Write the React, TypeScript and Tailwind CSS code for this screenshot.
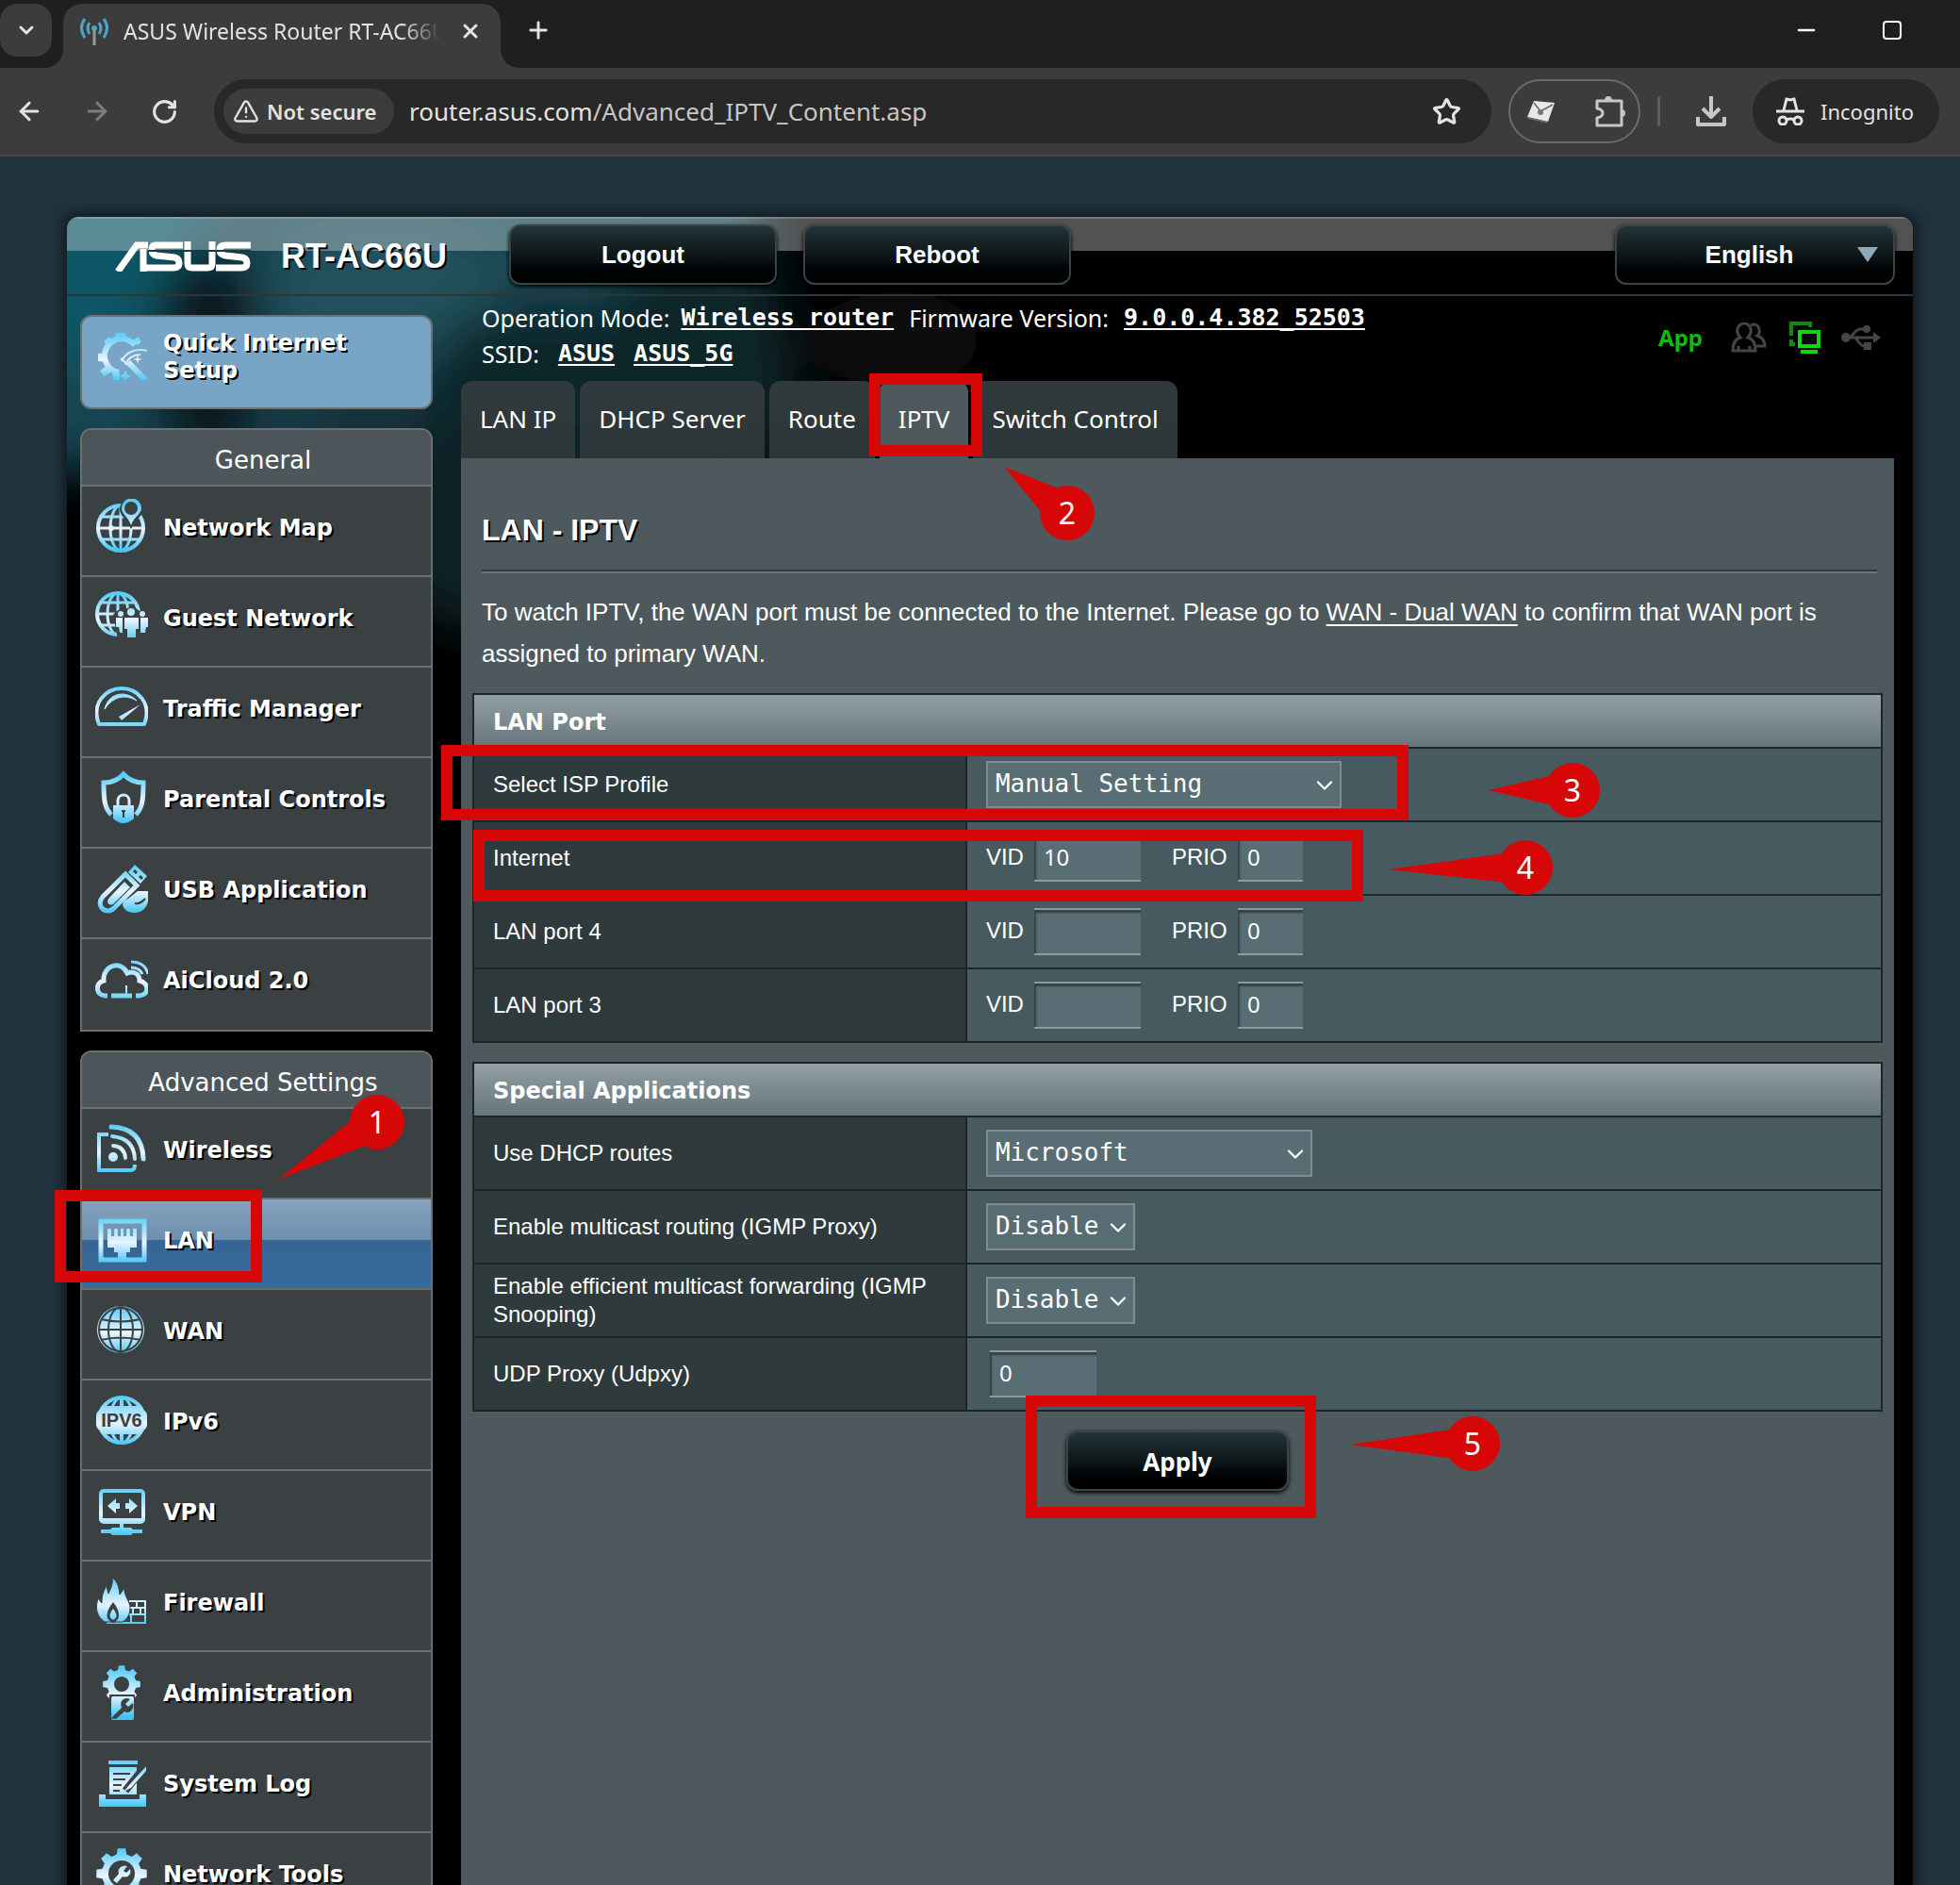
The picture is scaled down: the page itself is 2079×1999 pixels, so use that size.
import { ReactNode } from 'react';
import { ArrowLeft, ArrowRight, ChevronDown, Minus, Plus, RotateCw, Star, TriangleAlert, X } from 'lucide-react';

const CYAN = 'url(#cyan)';
const DARK = '#3b4042';

// Closed outline of a gear with flat teeth
const gearPath = (cx: number, cy: number, r: number, teeth = 8) => {
  const inner = r * 0.78;
  const step = (Math.PI * 2) / teeth;
  const points: string[] = [];
  for (let i = 0; i < teeth; i++) {
    const a = i * step - Math.PI / 2;
    [
      [inner, -0.32],
      [r, -0.2],
      [r, 0.2],
      [inner, 0.32],
    ].forEach(([radius, t]) => {
      points.push(`${(cx + radius * Math.cos(a + t * step)).toFixed(1)} ${(cy + radius * Math.sin(a + t * step)).toFixed(1)}`);
    });
  }
  return `M${points.join('L')}Z`;
};

const MenuIcon = ({ children }: { children: ReactNode }) => (
  <svg className="w-14 h-[60px] shrink-0" viewBox="0 0 56 60" fill="none" aria-hidden="true">
    {children}
  </svg>
);

const icons: Record<string, ReactNode> = {
  setup: (
    <MenuIcon>
      <path d="M40 12l5-4 4 5-4 4zM22 4h10l2 8H20zM9 13l6-5 6 6-7 6zM3 26l8-1v10l-8-1zM9 50l-4-6 7-5 6 6zM18 45l8 1v8h-7z" fill={CYAN} />
      <path d="M42 17a18 18 0 1 0-17 29" stroke={CYAN} strokeWidth="6" />
      <path d="M35 35l18 19" stroke={CYAN} strokeWidth="6" />
      <path d="M28 34c4-9 14-14 27-11M32 38c2-7 9-11 16-11M27 31l10 9" stroke={CYAN} strokeWidth="2" />
      <path d="M32 44l2 4 4 2-4 2-2 4-2-4-4-2 4-2zM45 27l1 4 4 1-4 1-1 4-1-4-4-1 4-1z" fill={CYAN} />
    </MenuIcon>
  ),
  map: (
    <MenuIcon>
      <circle cx="27" cy="31" r="24" stroke={CYAN} strokeWidth="4" />
      <ellipse cx="27" cy="31" rx="11" ry="24" stroke={CYAN} strokeWidth="3" />
      <path d="M27 7v48M3 31h48M7 19h40M7 43h40" stroke={CYAN} strokeWidth="3" />
      <circle cx="17" cy="31" r="3" fill={CYAN} />
      <path d="M38 32C33 22 26 17 26 11a12 12 0 0 1 25 0c0 6-8 11-13 21z" fill={DARK} />
      <path d="M38 28C35 19 28 16 28 10a10 10 0 0 1 21 0c0 6-8 9-11 18z" fill={CYAN} />
      <circle cx="38" cy="10" r="7" fill={DARK} />
    </MenuIcon>
  ),
  guest: (
    <MenuIcon>
      <circle cx="24" cy="26" r="22" stroke={CYAN} strokeWidth="4" />
      <ellipse cx="24" cy="26" rx="11" ry="22" stroke={CYAN} strokeWidth="3" />
      <path d="M24 4v44M2 26h44M6 14h36M6 38h36" stroke={CYAN} strokeWidth="3" />
      <path d="M19 27q6-8 12-5 8-7 16 1 8 0 10 8v22H24z" fill={DARK} />
      <circle cx="38" cy="24" r="4" fill={CYAN} />
      <circle cx="27" cy="26" r="3" fill={CYAN} />
      <circle cx="50" cy="26" r="3" fill={CYAN} />
      <path d="M31 30h15v12h-3v9h-9v-9h-3zM22 30h7v16h-3l-1-6h-3zM48 30h8v10h-2l-1 6h-5z" fill={CYAN} />
    </MenuIcon>
  ),
  traffic: (
    <MenuIcon>
      <path d="M4 47C-5 24 12 9 28 9s33 15 24 38z" stroke={CYAN} strokeWidth="4" strokeLinejoin="round" />
      <path d="M10 31c5-20 25-19 34-9-14-8-26-3-34 9z" fill={CYAN} stroke={CYAN} />
      <path d="M25 39l23-13-20 17z" fill={CYAN} />
    </MenuIcon>
  ),
  parental: (
    <MenuIcon>
      <path d="M17 47C10 40 9 32 9 13q13 0 21-9 8 9 21 9c0 19-1 27-8 34" stroke={CYAN} strokeWidth="5" />
      <path d="M24 37v-5c0-8 12-8 12 0v5" stroke={CYAN} strokeWidth="3" />
      <path d="M19 37h22v14q-11 10-22 0z" fill={CYAN} />
      <path d="M30 42v8M28 43h4" stroke={DARK} strokeWidth="2" />
    </MenuIcon>
  ),
  usb: (
    <MenuIcon>
      <path d="M32 14L44 26 20 50q-7 6-13 0-4-6 1-12z" stroke={CYAN} strokeWidth="5" />
      <path d="M31 22l6 6-18 18q-5 2-6-3 0-2 2-4z" fill={CYAN} />
      <path d="M35 12l7-8 13 12-7 8z" fill={CYAN} />
      <path d="M41 10l3 3M47 16l3 3" stroke={DARK} strokeWidth="3" />
      <path d="M29 47q0-5 6-7l10-8h11v11q-3 12-15 12-10-1-12-8z" fill={CYAN} />
      <path d="M42 45q6 1 11-5" stroke={DARK} strokeWidth="2" />
    </MenuIcon>
  ),
  cloud: (
    <MenuIcon>
      <path d="M13 47H10C0 46 0 33 9 31 8 14 28 9 34 23c7-3 13 1 13 8 11 3 10 15 0 16h-4" stroke={CYAN} strokeWidth="5" />
      <path d="M17 47h22" stroke={CYAN} strokeWidth="5" />
      <path d="M33 36v9" stroke={CYAN} strokeWidth="2" />
      <path d="M38 11q15 0 18 13M38 17q9 0 12 7" stroke={CYAN} strokeWidth="3" />
    </MenuIcon>
  ),
  wireless: (
    <MenuIcon>
      <path d="M14 14H4v38h34q4 0 4-6" stroke={CYAN} strokeWidth="4" />
      <path d="M17 6q33 1 34 34" stroke={CYAN} strokeWidth="5" strokeLinecap="round" />
      <path d="M18 16q23 2 24 24M19 26q12 1 13 13" stroke={CYAN} strokeWidth="4" strokeLinecap="round" />
      <circle cx="19" cy="38" r="5" fill={CYAN} />
    </MenuIcon>
  ),
  lan: (
    <MenuIcon>
      <rect x="6" y="10" width="46" height="41" stroke={CYAN} strokeWidth="5" />
      <path d="M13 18h4v8h3v-8h4v8h3v-8h3v8h3v-8h4v8h3v-8h4v20h-7v5h-4v6H24v-6h-4v-5h-7z" fill={CYAN} />
    </MenuIcon>
  ),
  wan: (
    <MenuIcon>
      <circle cx="27" cy="29" r="25" fill={CYAN} />
      <circle cx="27" cy="29" r="23" stroke={DARK} strokeWidth="2" />
      <ellipse cx="27" cy="29" rx="13" ry="24" stroke={DARK} strokeWidth="2" />
      <path d="M27 5v48M3 29h48M6 18q21 5 42 0M6 40q21-5 42 0" stroke={DARK} strokeWidth="2" />
    </MenuIcon>
  ),
  ipv6: (
    <MenuIcon>
      <circle cx="28" cy="29" r="24" stroke={CYAN} strokeWidth="4" />
      <ellipse cx="28" cy="29" rx="12" ry="24" stroke={CYAN} strokeWidth="3" />
      <path d="M28 5v48M8 16h40M8 42h40" stroke={CYAN} strokeWidth="4" />
      <rect x="1" y="18" width="54" height="22" rx="6" fill={CYAN} />
      <text x="28" y="36" textAnchor="middle" fontSize="20" fontWeight="700" fontFamily="Liberation Sans, sans-serif" fill={DARK} className="text-shadow-none">
        IPV6
      </text>
    </MenuIcon>
  ),
  vpn: (
    <MenuIcon>
      <rect x="6" y="8" width="45" height="33" rx="3" stroke={CYAN} strokeWidth="4" />
      <path d="M6 37h45v4H6z" fill={CYAN} />
      <path d="M13 24l9-8v5h4v6h-4v5zM45 24l-9-8v5h-4v6h4v5z" fill={CYAN} />
      <path d="M28 42v8" stroke={CYAN} strokeWidth="4" />
      <path d="M6 49h10l2-2h20l2 2h10v4H40l-2 2H18l-2-2H6z" fill={CYAN} />
    </MenuIcon>
  ),
  firewall: (
    <MenuIcon>
      <path d="M12 52h41V29H36M36 36h17M34 43h19M44 29v7M40 36v7M48 36v7M38 43v9" stroke={CYAN} strokeWidth="2" />
      <path d="M10 51C1 45 0 36 3 26l4 5c0-9 2-13 5-18l2 8c3-6 5-11 4-17 7 5 7 12 8 18l5-7c-1 8 6 14 6 21 0 7-3 12-8 15z" fill={CYAN} stroke={DARK} />
      <path d="M19 52c-10-4-7-13 0-22 7 9 9 18 0 22z" fill={DARK} />
      <path d="M19 49c-6-3-3-8 0-12 3 4 6 9 0 12z" fill={CYAN} />
    </MenuIcon>
  ),
  admin: (
    <MenuIcon>
      <path d={gearPath(28, 21, 20)} fill={CYAN} />
      <circle cx="28" cy="21" r="8" fill={DARK} />
      <rect x="15" y="32" width="27" height="28" fill={DARK} />
      <rect x="17" y="34" width="24" height="25" rx="2" fill={CYAN} />
      <path d="M17 57l11-11c-3-7 3-12 9-9l-5 5 3 3 5-4c2 7-4 12-9 9l-9 8z" fill={DARK} />
    </MenuIcon>
  ),
  log: (
    <MenuIcon>
      <path d="M14 6h31v4H14zM15 13h29v29H15z" fill={CYAN} />
      <path d="M19 20h18M19 26h13M19 32h9M19 38h7" stroke={DARK} strokeWidth="2" />
      <path d="M53 12L32 38" stroke={DARK} strokeWidth="8" />
      <path d="M54 12L36 32l-6 7 8-4 16-18z" fill={CYAN} />
      <path d="M4 42h7v5h36v-5h7v13H4z" fill={CYAN} />
    </MenuIcon>
  ),
  tools: (
    <MenuIcon>
      <path d={gearPath(28, 30, 27)} fill={CYAN} />
      <circle cx="28" cy="30" r="14" fill={DARK} />
      <path d="M19 37l6-7c-2-6 4-10 9-8l-4 5 3 2 4-4c2 6-3 10-8 8l-6 7z" fill={CYAN} />
    </MenuIcon>
  ),
};

const generalMenu = [
  { label: 'Network Map', icon: 'map' },
  { label: 'Guest Network', icon: 'guest' },
  { label: 'Traffic Manager', icon: 'traffic' },
  { label: 'Parental Controls', icon: 'parental' },
  { label: 'USB Application', icon: 'usb' },
  { label: 'AiCloud 2.0', icon: 'cloud' },
];

const advancedMenu = [
  { label: 'Wireless', icon: 'wireless' },
  { label: 'LAN', icon: 'lan' },
  { label: 'WAN', icon: 'wan' },
  { label: 'IPv6', icon: 'ipv6' },
  { label: 'VPN', icon: 'vpn' },
  { label: 'Firewall', icon: 'firewall' },
  { label: 'Administration', icon: 'admin' },
  { label: 'System Log', icon: 'log' },
  { label: 'Network Tools', icon: 'tools' },
];

const tabs = ['LAN IP', 'DHCP Server', 'Route', 'IPTV', 'Switch Control'];

// Red outline laid over the control it points out
const Frame = ({ className }: { className: string }) => (
  <span className={`absolute z-10 border-12 border-[#d70707] pointer-events-none ${className}`} />
);

// Numbered balloon, tail goes from the circle to (dx, dy) measured from its centre
const Callout = ({ n, dx, dy, className }: { n: number; dx: number; dy: number; className: string }) => {
  const len = Math.hypot(dx, dy);
  const ux = dx / len;
  const uy = dy / len;
  const ax = 30 + ux * 25 - uy * 15;
  const ay = 30 + uy * 25 + ux * 15;
  const bx = 30 + ux * 25 + uy * 15;
  const by = 30 + uy * 25 - ux * 15;
  return (
    <svg className={`absolute z-20 size-[60px] max-w-none overflow-visible pointer-events-none ${className}`} viewBox="0 0 60 60">
      <path d={`M${30 + dx} ${30 + dy}L${ax} ${ay}L${bx} ${by}Z`} fill="#d70707" />
      <circle cx="30" cy="30" r="29" fill="#d70707" />
      <text x="30" y="42" textAnchor="middle" fontSize="32" fontWeight="400" fontFamily="Noto Sans, sans-serif" fill="#fff">{n}</text>
    </svg>
  );
};

const glossy =
  'rounded-xl border-2 border-[#3a4447] bg-linear-to-b from-[#243539] via-[#0a1113] via-60% to-black font-bold text-white shadow-[0_2px_4px_#000]';

const monoLink =
  "font-['DejaVu_Sans_Mono',monospace] font-bold underline decoration-2 underline-offset-[3px] [text-decoration-skip-ink:none]";

const BrowserBar = () => (
  <header className="shrink-0 bg-[#3c3c3c] border-b-2 border-[#474747] font-['Noto_Sans',sans-serif] text-[#e3e3e3]">
    <div className="flex h-[72px] bg-[#1f1f1f]">
      <div className="w-[67px] bg-[#3c3c3c]">
        <div className="h-full bg-[#1f1f1f] rounded-br-[20px] pt-1">
          <button aria-label="Search tabs" className="flex h-14 w-[55px] items-center justify-center rounded-[18px] bg-[#3c3c3c]">
            <ChevronDown className="size-6" strokeWidth={3} />
          </button>
        </div>
      </div>
      <div className="mt-1 flex w-[464px] items-center rounded-t-[20px] bg-[#3c3c3c] pl-[17px] pb-2.5">
        <svg className="size-8 shrink-0" viewBox="0 0 32 32" fill="none" stroke="#4ea3c4" strokeWidth="3" aria-hidden="true">
          <path d="M6 3q-7 9 0 20M11 7q-4 6 0 12M26 3q7 9 0 20M21 7q4 6 0 12" />
          <path d="M16 14v17" stroke="#999" />
          <circle cx="16" cy="13" r="3" fill="#4ea3c4" stroke="none" />
        </svg>
        <span className="ml-[15px] w-[336px] overflow-hidden whitespace-nowrap text-[23px] mask-r-from-88% mask-r-to-100%">
          ASUS Wireless Router RT-AC66U
        </span>
        <button aria-label="Close tab" className="ml-5">
          <X className="size-6" strokeWidth={3} />
        </button>
      </div>
      <div className="flex-1 bg-[#3c3c3c]">
        <div className="flex h-full items-center justify-between bg-[#1f1f1f] rounded-bl-[20px] pl-[26px] pr-[62px] pb-2">
          <button aria-label="New tab">
            <Plus className="size-7" strokeWidth={2.5} />
          </button>
          <div className="flex items-center gap-[67px] text-white">
            <button aria-label="Minimize">
              <Minus className="size-7" strokeWidth={2} />
            </button>
            <button aria-label="Maximize" className="size-5 rounded-sm border-2 border-white" />
          </div>
        </div>
      </div>
    </div>
    <div className="flex h-[92px] items-center pl-4 pr-[22px]">
      <button aria-label="Back">
        <ArrowLeft className="size-[30px]" strokeWidth={2.5} />
      </button>
      <button aria-label="Forward" className="ml-[42px] text-[#7d7d7d]">
        <ArrowRight className="size-[30px]" strokeWidth={2.5} />
      </button>
      <button aria-label="Reload" className="ml-[42px]">
        <RotateCw className="size-[29px]" strokeWidth={2.5} />
      </button>
      <div className="ml-[38px] flex h-[68px] flex-1 items-center rounded-full bg-[#282828] pl-2.5 pr-8">
        <button className="flex h-12 w-[181px] shrink-0 items-center gap-2 rounded-full bg-[#3c3c3c] pl-2.5 text-[22px] font-semibold whitespace-nowrap">
          <TriangleAlert className="size-7" />
          Not secure
        </button>
        <p className="ml-4 flex-1 text-[26px] text-[#c7c7c7]">
          <span className="text-[#e3e3e3]">router.asus.com</span>/Advanced_IPTV_Content.asp
        </p>
        <button aria-label="Bookmark this page">
          <Star className="size-[31px]" strokeWidth={2.5} strokeLinejoin="miter" />
        </button>
      </div>
      <div className="ml-[18px] flex h-[68px] w-[140px] items-center justify-between rounded-full border-2 border-[#6b6b6b] pl-4 pr-[13px]">
        <svg className="size-8" viewBox="0 0 32 32" aria-hidden="true">
          <path d="M9 5l22 2-7 20L2 22z" fill="#e8e8e8" />
          <path d="M9 7l7 9L29 9M2 23l21 5" stroke="#666" strokeWidth="1.5" fill="none" />
          <circle cx="16" cy="17" r="3" fill="#777" />
        </svg>
        <svg className="size-[34px]" viewBox="0 0 34 34" fill="none" stroke="#c7c7c7" strokeWidth="3" strokeLinejoin="round" aria-hidden="true">
          <path d="M3 6h26v26H3v-8q6-1 6-5t-6-5z" />
          <path d="M11 6q0-5 4-5t4 5zM29 15q4 0 4 4t-4 4z" fill="#c7c7c7" stroke="none" />
        </svg>
      </div>
      <div className="ml-[18px] h-8 w-[3px] rounded-full bg-[#5c5c5c]" />
      <button aria-label="Downloads" className="ml-9">
        <svg className="size-9" viewBox="0 0 36 36" fill="none" stroke="#c7c7c7" strokeWidth="4" strokeLinejoin="round">
          <path d="M18 2v22M9 15l9 9 9-9M4 24v8h28v-8" />
        </svg>
      </button>
      <button className="ml-[26px] flex h-[68px] w-[198px] items-center gap-[17px] rounded-full bg-[#282828] pl-[25px] text-[22px]">
        <svg className="size-[30px]" viewBox="0 0 30 30" fill="none" stroke="currentColor" strokeWidth="3" aria-hidden="true">
          <path d="M0 15h30M8 14l3-12 4 1 4-1 3 12" />
          <circle cx="7" cy="25" r="4" />
          <circle cx="23" cy="25" r="4" />
          <path d="M11 24q4-2 8 0" />
        </svg>
        Incognito
      </button>
    </div>
  </header>
);

const AsusLogo = () => (
  <svg className="h-8 w-[145px]" viewBox="0 0 145 32" fill="none" stroke="#fff" strokeWidth="7" role="img" aria-label="ASUS">
    <path d="M4 32L24 4h12M31 8v24" strokeWidth="7" />
    <path d="M73 4H44q-4 0-4 5t5 6l19 2q5 1 5 6t-6 5H30" />
    <path d="M78 0v24q0 4 5 4h16q5 0 5-4V0" />
    <path d="M145 4h-27q-6 0-6 5t6 6l18 2q5 1 5 6t-6 5h-27" />
    <path d="M36 10h109" stroke="#1c3a44" strokeWidth="2" />
  </svg>
);

// Out-of-focus lights behind the top of the panel
const Backdrop = () => (
  <svg className="absolute inset-0 h-[620px] w-full rounded-t-xl" viewBox="0 0 1958 620" preserveAspectRatio="xMinYMin slice" aria-hidden="true">
    <defs>
      <filter id="soft" x="-50%" y="-50%" width="200%" height="200%">
        <feGaussianBlur stdDeviation="26" />
      </filter>
      <linearGradient id="cyan" gradientUnits="userSpaceOnUse" x1="0" y1="4" x2="0" y2="56">
        <stop offset="0" stopColor="#54cdf8" />
        <stop offset="0.55" stopColor="#e9f4ff" />
        <stop offset="1" stopColor="#3cc4f4" />
      </linearGradient>
    </defs>
    <rect width="1958" height="620" fill="#000" />
    <g filter="url(#soft)">
      <rect x="-60" y="-60" width="800" height="330" fill="#174451" />
      <ellipse cx="60" cy="60" rx="110" ry="110" fill="#0f5766" />
      <ellipse cx="150" cy="150" rx="60" ry="120" fill="#0c151b" />
      <ellipse cx="340" cy="80" rx="130" ry="70" fill="#23515d" />
      <ellipse cx="330" cy="210" rx="100" ry="50" fill="#12323a" />
      <ellipse cx="660" cy="170" rx="110" ry="140" fill="#10262c" />
      <ellipse cx="500" cy="170" rx="120" ry="80" fill="#0f252c" />
      <ellipse cx="460" cy="320" rx="140" ry="120" fill="#0c2026" />
      <ellipse cx="880" cy="130" rx="90" ry="50" fill="#101010" />
    </g>
    <rect width="1958" height="36" fill="#fff" opacity="0.32" />
    <rect width="1958" height="2" fill="#fff" opacity="0.2" />
  </svg>
);

const TopBar = () => (
  <div className="flex h-[84px] items-start border-b-2 border-[#2c3538] pt-2 pl-[50px] pr-[19px] font-['Liberation_Sans',sans-serif] text-[26px]">
    <div className="flex h-[68px] w-[419px] items-center gap-8">
      <AsusLogo />
      <span className="text-4xl font-bold text-white text-shadow-[2px_2px_0_#000]">RT-AC66U</span>
    </div>
    <button className={`h-16 w-[284px] ${glossy}`}>Logout</button>
    <button className={`ml-7 h-16 w-[284px] ${glossy}`}>Reboot</button>
    <button className={`relative ml-auto h-16 w-[297px] pr-3 ${glossy}`}>
      English
      <svg className="absolute top-[22px] right-4 h-4 w-[22px]" viewBox="0 0 22 16" aria-hidden="true">
        <path d="M0 0h22L11 16z" fill="#8fa9b8" />
      </svg>
    </button>
  </div>
);

const Menu = ({ title, items, active }: { title: string; items: { label: string; icon: string }[]; active?: string }) => (
  <nav className="mt-5 rounded-t-xl border-2 border-[#6b7071] bg-[#3b4042] pb-0.5">
    <h2 className="flex h-[58px] items-center justify-center rounded-t-[10px] bg-linear-to-b from-[#4d5459] to-[#4d575b] pl-3.5 pt-1.5 text-[26px]">
      {title}
    </h2>
    <ul>
      {items.map(({ label, icon }) => (
        <li key={label} className="relative">
          <a
            href="#"
            className={`flex h-24 items-center gap-4 border-t-2 border-[#6b7071] pb-2 pl-3.5 font-bold text-shadow-[2px_2px_0_#000] ${
              label === active ? 'bg-[linear-gradient(#87a3bd,#6c8fae_46%,#376594_46%,#376b9c)]' : 'bg-[#3b4042]'
            }`}
          >
            {icons[icon]}
            <span className="pt-0.5">{label}</span>
          </a>
          {label === active && (
            <>
              <Frame className="-left-[29px] -top-2 h-[98px] w-[220px]" />
              <Callout n={1} dx={-105} dy={61} className="left-[283px] -top-[110px]" />
            </>
          )}
        </li>
      ))}
    </ul>
  </nav>
);

const Sidebar = () => (
  <aside className="w-[374px] shrink-0 pt-5 font-['DejaVu_Sans',sans-serif] text-2xl leading-[29px] text-white">
    <a
      href="#"
      className="flex h-[100px] items-center gap-4 rounded-xl border-2 border-[#6b7071] bg-[#78a5c6] pb-2.5 pl-3.5 pr-10 font-bold text-shadow-[2px_2px_0_#000]"
    >
      {icons.setup}
      Quick Internet Setup
    </a>
    <Menu title="General" items={generalMenu} />
    <Menu title="Advanced Settings" items={advancedMenu} active="LAN" />
  </aside>
);

const StatusBar = () => (
  <div className="flex h-[90px] justify-between pl-[22px] pr-3.5 pt-1 font-['Noto_Sans',sans-serif] text-[25px] leading-[38px] text-white">
    <div>
      <p className="flex gap-3">
        Operation Mode:
        <a href="#" className={monoLink}>Wireless router</a>
        <span className="ml-1">Firmware Version:</span>
        <a href="#" className={`ml-1 ${monoLink}`}>9.0.0.4.382_52503</a>
      </p>
      <p className="flex gap-5">
        SSID:
        <span className={monoLink}>ASUS</span>
        <span className={monoLink}>ASUS_5G</span>
      </p>
    </div>
    <div className="flex h-20 items-center">
      <a href="#" className="text-2xl font-bold text-[#12b912]">App</a>
      <svg className="ml-[30px] h-8 w-[38px]" viewBox="0 0 38 32" fill="none" stroke="#454545" strokeWidth="3" aria-hidden="true">
        <path d="M2 30q0-12 8-14-4-4-3-9 2-6 7-6t7 6q1 5-3 9 8 2 8 14zM8 30v-5M20 30v-5" />
        <path d="M21 3q7-3 9 4 1 5-2 7 8 3 8 11h-9" />
      </svg>
      <svg className="ml-6 h-9 w-[34px]" viewBox="0 0 34 36" fill="none" stroke="#12d612" strokeWidth="4" aria-hidden="true">
        <path d="M2 16V3h20v4M2 20v5h4" stroke="#0e8a0e" strokeWidth="4" />
        <rect x="11" y="12" width="20" height="15" />
        <path d="M12 33h18" />
      </svg>
      <svg className="ml-[21px] h-7 w-[42px]" viewBox="0 0 42 28" fill="none" stroke="#454545" strokeWidth="3" aria-hidden="true">
        <path d="M4 14h32M10 14q6-9 10-9h5M15 14q6 9 9 9h3" />
        <path d="M34 8l8 6-8 6z" fill="#454545" stroke="none" />
        <circle cx="5" cy="14" r="5" fill="#454545" stroke="none" />
        <circle cx="27" cy="5" r="4" fill="#454545" stroke="none" />
        <rect x="24" y="19" width="8" height="8" fill="#454545" stroke="none" />
      </svg>
    </div>
  </div>
);

const Tabs = () => (
  <ul className="flex gap-[5px] font-['Noto_Sans',sans-serif] text-[26px] text-white">
    {tabs.map((tab) => (
      <li key={tab} className="relative">
        <a
          href="#"
          className={`flex h-[82px] items-center rounded-t-xl px-5 pb-0.5 ${
            tab === 'IPTV' ? 'bg-[#4d595d]' : 'bg-linear-to-b from-[#303a3c] to-[#2d3638]'
          }`}
        >
          {tab}
        </a>
        {tab === 'IPTV' && (
          <>
            <Frame className="-left-[11px] -top-2 h-[88px] w-[120px]" />
            <Callout n={2} dx={-67} dy={-49} className="left-[169px] top-[110px]" />
          </>
        )}
      </li>
    ))}
  </ul>
);

const Dropdown = ({ id, options, className }: { id: string; options: string[]; className: string }) => (
  <div className={`relative h-[50px] ${className}`}>
    <select
      id={id}
      className="h-full w-full appearance-none border-2 border-[#858b8d] bg-[#596d74] pl-2 pb-0.5 font-['DejaVu_Sans_Mono',monospace] text-[26px] text-white"
    >
      {options.map((option) => (
        <option key={option}>{option}</option>
      ))}
    </select>
    <ChevronDown className="pointer-events-none absolute right-1 top-3 size-7 text-white" strokeWidth={2} />
  </div>
);

const NumberBox = ({ id, value, className }: { id: string; value: string; className: string }) => (
  <input
    id={id}
    defaultValue={value}
    className={`h-[50px] border-y-2 border-[#8b9ba1] bg-[#596d74] pl-2.5 pb-1 font-['Noto_Sans',sans-serif] text-2xl text-white shadow-[inset_2px_3px_2px_#364147] ${className}`}
  />
);

const VlanFields = ({ id, vid }: { id: string; vid: string }) => (
  <div className="flex items-center">
    <label htmlFor={`${id}-vid`} className="w-[51px] pb-0.5">VID</label>
    <NumberBox id={`${id}-vid`} value={vid} className="w-[113px]" />
    <label htmlFor={`${id}-prio`} className="ml-[33px] w-[70px] pb-0.5">PRIO</label>
    <NumberBox id={`${id}-prio`} value="0" className="w-[69px]" />
  </div>
);

const SettingsTable = ({ title, children }: { title: string; children: ReactNode }) => (
  <table className="mt-5 w-full border-collapse border-2 border-[#1f2426] text-2xl">
    <thead>
      <tr>
        <th
          colSpan={2}
          className="h-[57px] border-2 border-[#1f2426] bg-linear-to-b from-[#92a0a3] to-[#66757c] px-5 pt-0.5 text-left font-['DejaVu_Sans',sans-serif] font-bold"
        >
          {title}
        </th>
      </tr>
    </thead>
    <tbody>{children}</tbody>
  </table>
);

const Row = ({ label, htmlFor, overlay, children }: { label: string; htmlFor?: string; overlay?: ReactNode; children: ReactNode }) => (
  <tr>
    <th scope="row" className="relative h-[78px] w-[35%] border-2 border-[#1f2426] bg-[#2f3a3d] px-5 text-left leading-[30px] font-normal">
      {htmlFor ? <label htmlFor={htmlFor}>{label}</label> : label}
      {overlay}
    </th>
    <td className="border-2 border-[#1f2426] bg-[#475a5f] px-5">{children}</td>
  </tr>
);

const Content = () => (
  <main className="flex-1 bg-[#4d595d] px-3 pt-14 font-['Liberation_Sans',sans-serif] text-white">
    <div className="pl-2.5 pr-1.5">
      <h1 className="text-[32px] leading-10 font-bold text-shadow-[2px_2px_0_#000]">LAN - IPTV</h1>
      <hr className="mt-[22px] h-1 border-t-2 border-b-2 border-t-[#313b3e] border-b-[#66767c]" />
      <p className="mt-[19px] text-[26px] leading-[44px]">
        To watch IPTV, the WAN port must be connected to the Internet. Please go to{' '}
        <a href="#" className="underline underline-offset-4">WAN - Dual WAN</a> to confirm that WAN port is assigned to primary WAN.
      </p>
    </div>

    <SettingsTable title="LAN Port">
      <Row
        label="Select ISP Profile"
        htmlFor="isp"
        overlay={
          <>
            <Frame className="-left-[35px] -top-1 h-20 w-[1026px]" />
            <Callout n={3} dx={-89} dy={0} className="left-[1135px] top-3.5" />
          </>
        }
      >
        <Dropdown id="isp" options={['Manual Setting', 'None']} className="w-[377px]" />
      </Row>
      <Row
        label="Internet"
        overlay={
          <>
            <Frame className="-left-px top-2 h-[76px] w-[944px]" />
            <Callout n={4} dx={-145} dy={2} className="left-[1085px] top-[18px]" />
          </>
        }
      >
        <VlanFields id="internet" vid="10" />
      </Row>
      <Row label="LAN port 4">
        <VlanFields id="lan4" vid="" />
      </Row>
      <Row label="LAN port 3">
        <VlanFields id="lan3" vid="" />
      </Row>
    </SettingsTable>

    <SettingsTable title="Special Applications">
      <Row label="Use DHCP routes" htmlFor="dhcp">
        <Dropdown id="dhcp" options={['Microsoft', 'Disable']} className="w-[346px]" />
      </Row>
      <Row label="Enable multicast routing (IGMP Proxy)" htmlFor="proxy">
        <Dropdown id="proxy" options={['Disable', 'Enable']} className="w-[158px]" />
      </Row>
      <Row label="Enable efficient multicast forwarding (IGMP Snooping)" htmlFor="snooping">
        <Dropdown id="snooping" options={['Disable', 'Enable']} className="w-[158px]" />
      </Row>
      <Row label="UDP Proxy (Udpxy)" htmlFor="udpxy">
        <NumberBox id="udpxy" value="0" className="ml-1 w-[113px]" />
      </Row>
    </SettingsTable>

    <div className="mt-5 flex justify-center">
      <div className="relative">
        <button className={`h-16 w-[236px] pt-0.5 font-['Noto_Sans',sans-serif] text-[26px] ${glossy}`}>Apply</button>
        <Frame className="-left-[43px] -top-[37px] h-[130px] w-[308px]" />
        <Callout n={5} dx={-130} dy={1} className="left-[401px] -top-4" />
      </div>
    </div>
  </main>
);

const App = () => (
  <div className="flex h-screen flex-col overflow-hidden bg-[#21333f]">
    <BrowserBar />
    <div className="min-h-0 flex-1 overflow-hidden pt-16 pl-[71px] pr-[50px]">
      <div className="relative isolate min-h-full rounded-t-xl bg-black shadow-[0_0_14px_4px_#10181d]">
        <Backdrop />
        <div className="relative">
          <TopBar />
          <div className="flex gap-[30px] pl-3.5 pr-5">
            <Sidebar />
            <div className="flex min-w-0 flex-1 flex-col">
              <StatusBar />
              <Tabs />
              <Content />
            </div>
          </div>
        </div>
      </div>
    </div>
  </div>
);

export default App;
